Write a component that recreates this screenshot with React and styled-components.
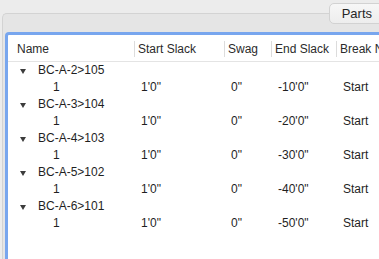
import React from 'react';
import styled, {createGlobalStyle} from 'styled-components';

const GlobalStyle = createGlobalStyle`
    html, body {
        margin: 0;
        padding: 0;
        background: #ececec;
        overflow: hidden;
    }

    body {
        font-family: 'Liberation Sans', Arial, sans-serif;
    }
`;

const Window = styled.div`
    width: 379px;
    height: 259px;
    padding-top: 3px;
    box-sizing: border-box;
    display: flex;
    flex-direction: column;
    overflow: hidden;
`;

const TabRow = styled.div`
    display: flex;
    justify-content: flex-end;
    margin-right: -8px;
    margin-bottom: -11px;
    position: relative;
    z-index: 1;
`;

const Tab = styled.div`
    height: 19px;
    padding: 0 14px 0 12px;
    display: flex;
    align-items: center;
    font-size: 13px;
    color: #262626;
    background: linear-gradient(#f7f7f7, #ededed);
    border: 1px solid #d2d2d2;
    border-radius: 5px;
`;

const Panel = styled.div`
    flex: 1;
    margin-left: 2px;
    padding: 18px 0 0 2px;
    background: #e5e5e5;
    border: 1px solid #d3d3d3;
    border-right: none;
    border-bottom: none;
    border-radius: 5px 0 0 0;
    display: flex;
    flex-direction: column;
`;

const TableBox = styled.div`
    flex: 1;
    background: #fff;
    border-top: 3px solid #78a6ee;
    border-left: 3px solid #78a6ee;
    border-radius: 4px 0 0 0;
    font-size: 12px;
    color: #1f1f1f;
`;

const columns = '126px 90px 47px 65px 1fr';

const HeaderRow = styled.div`
    display: grid;
    grid-template-columns: ${columns};
    height: 27px;
    box-sizing: border-box;
    padding-top: 2px;
    align-items: center;
    border-bottom: 1px solid #e4e4e4;
    color: #2b2b2b;
`;

const HeaderCell = styled.div`
    height: 16px;
    line-height: 16px;
    white-space: nowrap;
    padding-left: ${props => props.first ? '9px' : '3px'};
    border-left: ${props => props.first ? 'none' : '1px solid #dcdcdc'};
`;

const Row = styled.div`
    display: grid;
    grid-template-columns: ${columns};
    height: 17px;
    box-sizing: border-box;
    padding-bottom: 1px;
    align-items: center;
`;

const NameCell = styled.div`
    display: flex;
    align-items: center;
    padding-left: ${props => props.child ? '45px' : '12px'};
    white-space: nowrap;
`;

const Disclosure = styled.span`
    width: 0;
    height: 0;
    margin-top: 3px;
    margin-right: 12px;
    border-left: 3px solid transparent;
    border-right: 3px solid transparent;
    border-top: 5px solid #3c3c3c;
`;

const Cell = styled.div`
    padding-left: 7px;
    white-space: nowrap;
`;

const groups = [
    {name: 'BC-A-2>105', end: "-10'0\""},
    {name: 'BC-A-3>104', end: "-20'0\""},
    {name: 'BC-A-4>103', end: "-30'0\""},
    {name: 'BC-A-5>102', end: "-40'0\""},
    {name: 'BC-A-6>101', end: "-50'0\""},
];

const App = () => {
    return (
        <Window>
            <GlobalStyle />
            <TabRow>
                <Tab>Parts</Tab>
            </TabRow>
            <Panel>
                <TableBox>
                    <HeaderRow>
                        <HeaderCell first>Name</HeaderCell>
                        <HeaderCell>Start Slack</HeaderCell>
                        <HeaderCell>Swag</HeaderCell>
                        <HeaderCell>End Slack</HeaderCell>
                        <HeaderCell>Break N</HeaderCell>
                    </HeaderRow>
                    {
                        groups.map(({name, end}) => (
                            <React.Fragment key={name}>
                                <Row>
                                    <NameCell>
                                        <Disclosure />
                                        {name}
                                    </NameCell>
                                </Row>
                                <Row>
                                    <NameCell child>1</NameCell>
                                    <Cell>1'0"</Cell>
                                    <Cell>0"</Cell>
                                    <Cell>{end}</Cell>
                                    <Cell>Start</Cell>
                                </Row>
                            </React.Fragment>
                        ))
                    }
                </TableBox>
            </Panel>
        </Window>
    );
}

export default App;
